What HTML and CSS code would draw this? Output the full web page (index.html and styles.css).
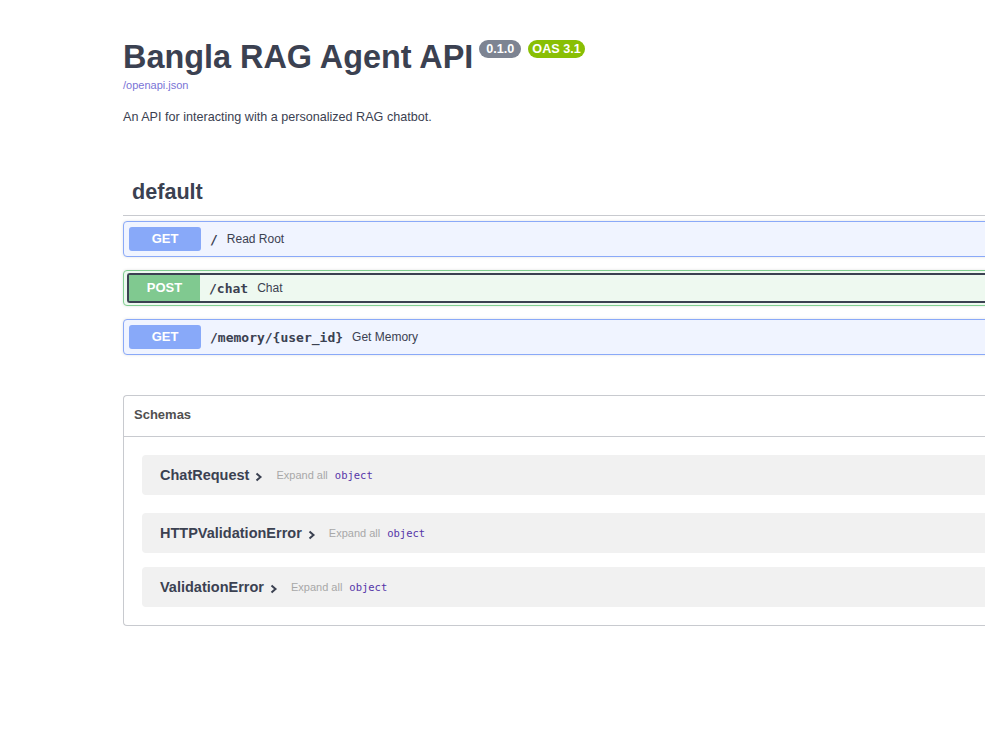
FILE: index.html
```html
<!DOCTYPE html>
<html>
<head>
<meta charset="utf-8">
<title>Bangla RAG Agent API</title>
<link rel="stylesheet" href="styles.css">
</head>
<body>
<div class="wrapper">
  <div class="info">
    <h2 class="title">Bangla RAG Agent API <span class="badge version">0.1.0</span> <span class="badge oas">OAS 3.1</span></h2>
    <a class="spec-link" href="#">/openapi.json</a>
    <p class="desc">An API for interacting with a personalized RAG chatbot.</p>
  </div>

  <div class="tag-section">
    <h3 class="tag">default</h3>
    <div class="opblock get">
      <div class="summary">
        <span class="method">GET</span>
        <span class="path">/</span>
        <span class="op-desc">Read Root</span>
      </div>
    </div>
    <div class="opblock post">
      <div class="summary">
        <div class="control focused">
          <span class="method">POST</span>
          <span class="path">/chat</span>
          <span class="op-desc">Chat</span>
        </div>
      </div>
    </div>
    <div class="opblock get">
      <div class="summary">
        <span class="method">GET</span>
        <span class="path">/memory/{user_id}</span>
        <span class="op-desc">Get Memory</span>
      </div>
    </div>
  </div>

  <section class="models">
    <h4 class="models-head">Schemas</h4>
    <div class="models-body">
      <div class="model-container first">
        <span class="model-title">ChatRequest</span>
        <svg class="chev" width="8" height="10" viewBox="0 0 8 10"><path d="M1.5 1.5 L5.5 5 L1.5 8.5" fill="none" stroke="#3b4151" stroke-width="2"/></svg>
        <span class="expand">Expand all</span>
        <span class="type">object</span>
      </div>
      <div class="model-container second">
        <span class="model-title">HTTPValidationError</span>
        <svg class="chev" width="8" height="10" viewBox="0 0 8 10"><path d="M1.5 1.5 L5.5 5 L1.5 8.5" fill="none" stroke="#3b4151" stroke-width="2"/></svg>
        <span class="expand">Expand all</span>
        <span class="type">object</span>
      </div>
      <div class="model-container third">
        <span class="model-title">ValidationError</span>
        <svg class="chev" width="8" height="10" viewBox="0 0 8 10"><path d="M1.5 1.5 L5.5 5 L1.5 8.5" fill="none" stroke="#3b4151" stroke-width="2"/></svg>
        <span class="expand">Expand all</span>
        <span class="type">object</span>
      </div>
    </div>
  </section>
</div>
</body>
</html>
```
FILE: styles.css
```css
html, body {
  margin: 0;
  padding: 0;
  background: #fff;
  overflow: hidden;
}
body {
  font-family: "Liberation Sans", Arial, sans-serif;
  color: #3b4151;
}
.wrapper {
  margin-left: 123px;
  width: 1214px;
}
.info {
  padding-top: 37px;
}
.title {
  margin: 0;
  font-size: 32.4px;
  line-height: 41px;
  font-weight: bold;
  color: #3b4151;
}
.badge {
  display: inline-block;
  vertical-align: top;
  margin-top: 3px;
  font-size: 12.6px;
  line-height: 18px;
  height: 18px;
  border-radius: 9px;
  color: #fff;
  font-weight: bold;
}
.badge.version {
  background: #7d8492;
  margin-left: -3px;
  padding: 0 7px;
}
.badge.oas {
  background: #89bf04;
  margin-left: -2px;
  padding: 0 4px;
}
.spec-link {
  display: block;
  margin-top: 1px;
  font-size: 11px;
  line-height: 13px;
  color: #7a74d6;
  text-decoration: none;
}
.desc {
  margin: 17px 0 0;
  font-size: 12.6px;
  line-height: 16px;
  color: #3b4151;
}
.tag-section {
  margin-top: 43px;
}
.tag {
  margin: 0 0 5px;
  padding: 10px 20px 9px 9px;
  font-size: 21.6px;
  line-height: 28px;
  font-weight: bold;
  border-bottom: 1px solid #c8cacf;
}
.opblock {
  border: 1px solid;
  border-radius: 4px;
  box-shadow: 0 0 3px rgba(0,0,0,.12);
  margin-bottom: 13px;
}
.opblock.get {
  background: #f0f4ff;
  border-color: #8aa9f8;
}
.opblock.post {
  background: #eef9f0;
  border-color: #80ce90;
}
.summary {
  display: flex;
  align-items: center;
  padding: 5px;
  height: 24px;
}
.opblock.post .summary {
  padding: 2px 2px 2px 3px;
  height: 30px;
}
.control {
  display: flex;
  align-items: center;
  flex: 1;
  height: 26px;
  border: 2px solid #3b4151;
  border-radius: 3px;
  border-right: none;
}
.method {
  width: 72px;
  height: 24px;
  line-height: 24px;
  text-align: center;
  color: #fff;
  font-weight: bold;
  font-size: 13px;
  border-radius: 3px;
  background: #88a9f9;
}
.opblock.post .method {
  background: #80c990;
  border-radius: 0;
  height: 26px;
  line-height: 26px;
  width: 71px;
}
.path {
  padding: 0 9px;
  font-family: "DejaVu Sans Mono", "Liberation Mono", monospace;
  font-weight: bold;
  font-size: 13px;
  color: #3b4151;
}
.op-desc {
  font-size: 12px;
  color: #3b4151;
}
.models {
  margin-top: 40px;
  border: 1px solid #c8cacf;
  border-radius: 4px;
  border-right: none;
}
.models-head {
  margin: 0;
  padding: 0 10px;
  height: 40px;
  line-height: 38px;
  font-size: 13px;
  font-weight: bold;
  color: #505050;
  border-bottom: 1px solid #c8cacf;
}
.models-body {
  padding: 18px 0 18px 18px;
}
.model-container {
  display: flex;
  align-items: center;
  height: 40px;
  padding-left: 18px;
  background: #f1f1f1;
  border-radius: 4px 0 0 4px;
}
.model-container.first {
  margin-bottom: 18px;
}
.model-container.second {
  margin-bottom: 14px;
}
.model-title {
  font-size: 14.5px;
  font-weight: bold;
  color: #3b4151;
}
.chev {
  margin-left: 6px;
  margin-top: 3px;
}
.expand {
  margin-left: 13px;
  font-size: 11px;
  color: #a8a8a8;
}
.type {
  margin-left: 7px;
  font-family: "DejaVu Sans Mono", "Liberation Mono", monospace;
  font-size: 10.5px;
  color: #5535a8;
}
```
